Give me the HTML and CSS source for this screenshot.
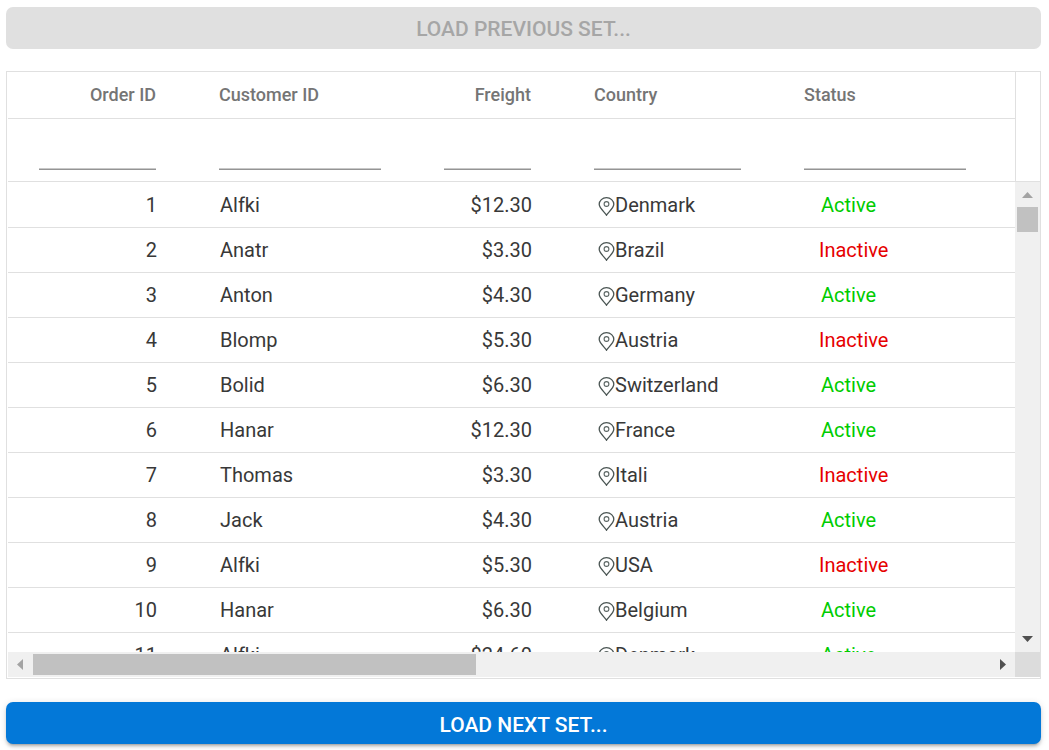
FILE: index.html
```html
<!DOCTYPE html>
<html lang="en">
<head>
<meta charset="utf-8">
<meta name="viewport" content="width=device-width, initial-scale=1">
<title>Orders</title>
<link rel="stylesheet" href="styles.css">
</head>
<body>
<svg class="symbols" aria-hidden="true">
  <symbol id="pin" viewBox="0 0 17 19">
    <path d="M8.500 18.200C7.200 15.600 1.200 11.200 1.200 7.300A7.300 6.600 0 0 1 15.800 7.300C15.800 11.200 9.800 15.600 8.500 18.200Z" fill="none" stroke="#4a5553" stroke-width="1.300"/>
    <circle cx="8.500" cy="7" r="2.400" fill="none" stroke="#5c6664" stroke-width="1.100"/>
  </symbol>
</svg>
<main class="page">
  <button class="btn" type="button" disabled>LOAD PREVIOUS SET...</button>

  <section class="grid" aria-label="Orders">
    <div class="grid-head">
      <table class="table">
        <colgroup><col class="c-id"><col class="c-customer"><col class="c-freight"><col class="c-country"><col class="c-status"><col></colgroup>
        <thead>
          <tr class="titles"><th class="num">Order ID</th><th>Customer ID</th><th class="num">Freight</th><th>Country</th><th>Status</th><th></th></tr>
          <tr class="filters">
            <td><input type="text" aria-label="Filter Order ID"></td>
            <td><input type="text" aria-label="Filter Customer ID"></td>
            <td><input type="text" aria-label="Filter Freight"></td>
            <td><input type="text" aria-label="Filter Country"></td>
            <td><input type="text" aria-label="Filter Status"></td>
            <td></td>
          </tr>
        </thead>
      </table>
    </div>
    <div class="grid-gutter"></div>

    <div class="grid-body">
      <table class="table">
        <colgroup><col class="c-id"><col class="c-customer"><col class="c-freight"><col class="c-country"><col class="c-status"><col></colgroup>
        <tbody>
          <tr><td class="num">1</td><td>Alfki</td><td class="num">$12.30</td><td><svg class="pin"><use href="#pin"/></svg>Denmark</td><td><span class="active">Active</span></td><td></td></tr>
          <tr><td class="num">2</td><td>Anatr</td><td class="num">$3.30</td><td><svg class="pin"><use href="#pin"/></svg>Brazil</td><td><span class="inactive">Inactive</span></td><td></td></tr>
          <tr><td class="num">3</td><td>Anton</td><td class="num">$4.30</td><td><svg class="pin"><use href="#pin"/></svg>Germany</td><td><span class="active">Active</span></td><td></td></tr>
          <tr><td class="num">4</td><td>Blomp</td><td class="num">$5.30</td><td><svg class="pin"><use href="#pin"/></svg>Austria</td><td><span class="inactive">Inactive</span></td><td></td></tr>
          <tr><td class="num">5</td><td>Bolid</td><td class="num">$6.30</td><td><svg class="pin"><use href="#pin"/></svg>Switzerland</td><td><span class="active">Active</span></td><td></td></tr>
          <tr><td class="num">6</td><td>Hanar</td><td class="num">$12.30</td><td><svg class="pin"><use href="#pin"/></svg>France</td><td><span class="active">Active</span></td><td></td></tr>
          <tr><td class="num">7</td><td>Thomas</td><td class="num">$3.30</td><td><svg class="pin"><use href="#pin"/></svg>Itali</td><td><span class="inactive">Inactive</span></td><td></td></tr>
          <tr><td class="num">8</td><td>Jack</td><td class="num">$4.30</td><td><svg class="pin"><use href="#pin"/></svg>Austria</td><td><span class="active">Active</span></td><td></td></tr>
          <tr><td class="num">9</td><td>Alfki</td><td class="num">$5.30</td><td><svg class="pin"><use href="#pin"/></svg>USA</td><td><span class="inactive">Inactive</span></td><td></td></tr>
          <tr><td class="num">10</td><td>Hanar</td><td class="num">$6.30</td><td><svg class="pin"><use href="#pin"/></svg>Belgium</td><td><span class="active">Active</span></td><td></td></tr>
          <tr><td class="num">11</td><td>Alfki</td><td class="num">$24.60</td><td><svg class="pin"><use href="#pin"/></svg>Denmark</td><td><span class="active">Active</span></td><td></td></tr>
        </tbody>
      </table>
    </div>

    <div class="bar bar-v">
      <svg class="arrow" viewBox="0 0 25 25"><path d="M7 16L12.500 10L18 16Z" fill="#a3a3a3"/></svg>
      <div class="track"><div class="thumb"></div></div>
      <svg class="arrow" viewBox="0 0 25 25"><path d="M7 9L18 9L12.500 15Z" fill="#505050"/></svg>
    </div>
    <div class="bar bar-h">
      <svg class="arrow" viewBox="0 0 25 25"><path d="M15 7L9 12.500L15 18Z" fill="#a3a3a3"/></svg>
      <div class="track"><div class="thumb"></div></div>
      <svg class="arrow" viewBox="0 0 25 25"><path d="M10 7L16 12.500L10 18Z" fill="#505050"/></svg>
    </div>
    <div class="bar-corner"></div>
  </section>

  <button class="btn primary" type="button">LOAD NEXT SET...</button>
</main>
</body>
</html>
```
FILE: styles.css
```css
* { box-sizing: border-box; }

body {
  margin: 0;
  background: #fff;
  font-family: Roboto, "Liberation Sans", sans-serif;
  color: #383838;
}

.symbols { position: absolute; width: 0; height: 0; }

.page {
  display: flex;
  flex-direction: column;
  padding: 7px 8px 6px 6px;
}

.btn {
  height: 42px;
  padding: 2px 12px 0;
  border: 0;
  border-radius: 7px;
  background: #e0e0e0;
  color: #a6a6a6;
  font: 500 21px/24px Roboto, "Liberation Sans", sans-serif;
}

.btn.primary {
  padding-top: 4px;
  background: #0378d8;
  color: #fff;
  box-shadow: 0 4px 2px -3px rgba(0, 0, 0, .2), 0 3px 3px rgba(0, 0, 0, .14), 0 1px 7px rgba(0, 0, 0, .12);
}

.grid {
  display: grid;
  grid-template-columns: minmax(0, 1fr) 25px;
  grid-template-rows: auto 470px 25px;
  margin: 22px 0 23px;
  padding: 0 0 1px 1px;
  border: 1px solid #e0e0e0;
}

.grid-head, .grid-body { overflow: hidden; }
.grid-head { border-bottom: 1px solid #e0e0e0; }
.grid-body { padding-top: 1px; }
.grid-gutter { border-left: 1px solid #e0e0e0; border-bottom: 1px solid #e0e0e0; }

.table {
  width: 100%;
  table-layout: fixed;
  border-collapse: separate;
  border-spacing: 0;
}

.c-id { width: 180px; }
.c-customer, .c-status { width: 225px; }
.c-freight { width: 150px; }
.c-country { width: 210px; }

.table th, .table td {
  padding: 0 32px 0 31px;
  text-align: left;
  white-space: nowrap;
}

.table th:last-child, .table td:last-child { padding: 0; }
.table .num { text-align: right; }

.table .titles th {
  height: 47px;
  padding-bottom: 2px;
  border-bottom: 1px solid #e0e0e0;
  color: #757575;
  font-size: 18px;
  font-weight: 500;
}

.table .filters td { height: 62px; padding-bottom: 11px; vertical-align: bottom; }

.filters input {
  display: block;
  width: 100%;
  height: 36px;
  padding: 0;
  border: 0;
  border-bottom: 1px solid #949494;
  box-shadow: inset 0 -1px #c8c8c8;
  background: none;
  font: 20px Roboto, "Liberation Sans", sans-serif;
  outline: 0;
}

.table tbody td {
  height: 45px;
  padding: 0 31px 0 32px;
  border-bottom: 1px solid #e0e0e0;
  font-size: 20px;
  line-height: 24px;
}

.pin {
  width: 17px;
  height: 19px;
  margin: 0 0 0 3px;
  vertical-align: -4px;
}

.active { padding-left: 16px; color: #00cc00; }
.inactive { padding-left: 14px; color: #e60000; }

.bar { display: flex; background: #f0f0f0; }
.bar-v { flex-direction: column; }
.bar-h { grid-column: 1; }
.arrow { flex: none; width: 25px; height: 25px; }
.track { flex: 1; }
.thumb { background: #c1c1c1; }
.bar-v .track { padding: 0 2px; }
.bar-v .thumb { height: 25px; }
.bar-h .track { padding: 2px 0; }
.bar-h .thumb { width: 46.3%; height: 100%; }
.bar-corner { background: #dcdcdc; }
```
